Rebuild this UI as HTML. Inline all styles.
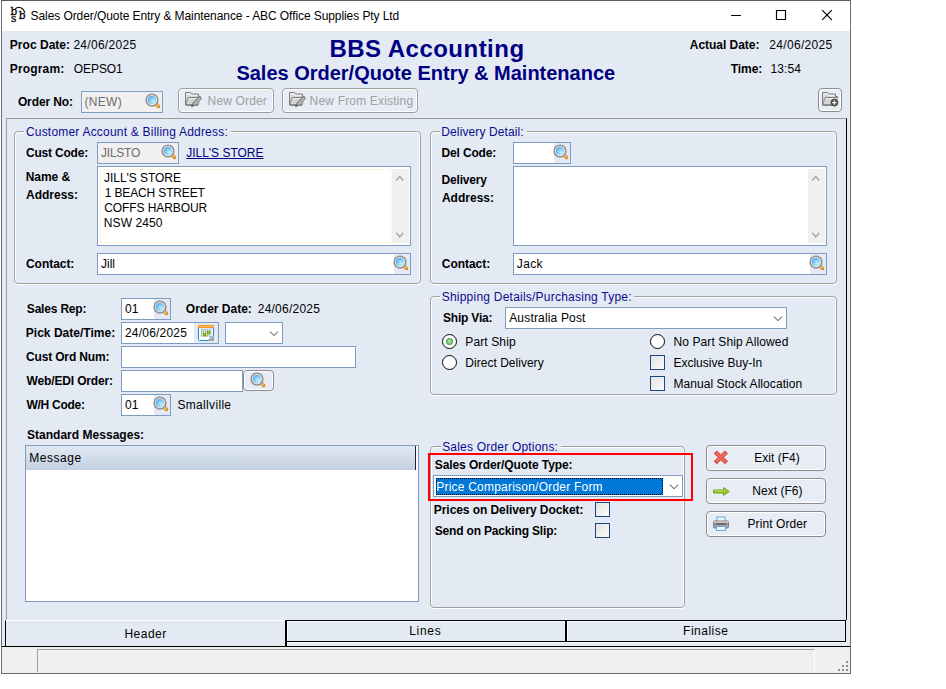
<!DOCTYPE html>
<html><head><meta charset="utf-8"><title>Sales Order/Quote Entry &amp; Maintenance</title>
<style>
html,body{margin:0;padding:0;background:#fff;}
body{width:946px;height:689px;position:relative;overflow:hidden;font-family:"Liberation Sans",sans-serif;font-size:12px;color:#000;}
.a{position:absolute;white-space:nowrap;line-height:14px;}
.b{font-weight:bold;}
.p{position:absolute;box-sizing:border-box;}
.in{position:absolute;box-sizing:border-box;border:1px solid #7F9DC3;background:#fff;}
.dis{background:#F0F0F0;}
.g{color:#6d6d6d;}
.gb{position:absolute;box-sizing:border-box;border:1px solid #A0A0A0;border-radius:4px;box-shadow:inset 1px 1px 0 #fff, inset -1px 0 0 #fff, 0 1px 0 #fff;}
.lg{position:absolute;background:#E3EAF4;color:#10109A;padding:0 2px 0 1px;line-height:14px;white-space:nowrap;}
.btn{position:absolute;box-sizing:border-box;border:1px solid #8C8C8C;border-radius:4px;background:#E7ECF5;box-shadow:inset 0 0 0 1px #fff;}
.cb{position:absolute;box-sizing:border-box;width:15px;height:15px;border:1px solid #1C4A80;background:linear-gradient(135deg,#E2E2E2,#FBFBFB);}
.rd{position:absolute;box-sizing:border-box;width:15.4px;height:15.4px;border:1px solid #050505;border-radius:50%;background:#fff;}
.ib{position:absolute;background:#E3EAF4;}
svg{position:absolute;overflow:visible;}
</style></head><body>
<svg width="0" height="0" style="left:0;top:0"><defs>
<radialGradient id="lens" cx="0.68" cy="0.68" r="0.85"><stop offset="0" stop-color="#C8F0FB"/><stop offset="0.5" stop-color="#86CCF4"/><stop offset="1" stop-color="#3B98EC"/></radialGradient>
<linearGradient id="fold" x1="0" y1="0" x2="0" y2="1"><stop offset="0" stop-color="#E4E4E4"/><stop offset="1" stop-color="#B4B4B4"/></linearGradient>
<g id="mag"><path d="M12.3 12.3L14.5 14.5" stroke="#D48712" stroke-width="3.5" stroke-linecap="round"/><path d="M12.9 12.9L14.3 14.3" stroke="#F5A833" stroke-width="2" stroke-linecap="round"/><path d="M12 12L13 13" stroke="#E6E2DA" stroke-width="1.6" stroke-linecap="round"/><circle cx="8" cy="8" r="5.9" fill="#E9E9E9" stroke="#8E8E8E" stroke-width="1.45"/><circle cx="8" cy="8" r="4.35" fill="url(#lens)"/></g>
<g id="folder"><path d="M0.5 1.5h5l1.5 1.5h6.5v2.5h2l-2.5 8.5h-12.5z" fill="url(#fold)" stroke="#808080" stroke-width="1"/><path d="M1.5 3.2h3.6l1.4 1.2h6" fill="none" stroke="#F4F4F4" stroke-width="0.9"/><path d="M0.8 13.5l2.6-7h12" fill="none" stroke="#808080" stroke-width="1"/><path d="M3.6 7.2h11.2l-2 5.8h-11.3z" fill="#D4D4D4"/><path d="M4 7.6h10" stroke="#F0F0F0" stroke-width="0.8"/><path d="M0.5 14.2h12.5" stroke="#707070" stroke-width="0.9"/></g>
</defs></svg>
<div class="p" style="left:1px;top:0;width:850px;height:674px;border:1px solid #6E6E6E;border-top-color:#5A5A5A;background:#E3EAF4"></div>
<div class="p" style="left:2px;top:1px;width:848px;height:30px;background:#fff"></div>
<svg style="left:9px;top:5px" width="20" height="20" viewBox="0 0 20 20"><g font-family="DejaVu Serif, serif" fill="#000" stroke="#000" stroke-width="0.3"><text x="1.6" y="9.7" font-size="10.5">b</text><text x="1.9" y="16.9" font-size="10.5">s</text><text x="9.8" y="13.9" font-size="10.5">b</text></g><path d="M6.2 3.9C9.4 1.0 14.6 2.4 15.8 7.8" fill="none" stroke="#111" stroke-width="1.1"/></svg>
<div class="a " style="left:30.58px;top:9px;color:#000;letter-spacing:-0.080px;">Sales Order/Quote Entry &amp; Maintenance - ABC Office Supplies Pty Ltd</div>
<svg style="left:0;top:0" width="1" height="1"><path d="M731 15.5h10M776.5 10.5h9v9h-9zM822.2 10.2l9.6 9.6M831.8 10.2l-9.6 9.6" stroke="#000" stroke-width="1.15" fill="none"/></svg>
<div class="a b" style="left:9.85px;top:38px;;letter-spacing:0.019px;">Proc Date:</div>
<div class="a " style="left:73.38px;top:38px;;letter-spacing:0.292px;">24/06/2025</div>
<div class="a b" style="left:9.85px;top:62px;;letter-spacing:0.146px;">Program:</div>
<div class="a " style="left:73.78px;top:62px;;letter-spacing:-0.065px;">OEPSO1</div>
<div class="a b" style="left:689.82px;top:38px;;letter-spacing:-0.036px;">Actual Date:</div>
<div class="a " style="left:769.28px;top:38px;;letter-spacing:0.325px;">24/06/2025</div>
<div class="a b" style="left:730.68px;top:62px;;letter-spacing:-0.050px;">Time:</div>
<div class="a " style="left:770.52px;top:62px;;letter-spacing:0.113px;">13:54</div>
<div class="a b" style="left:329.38px;top:35px;font-size:24px;line-height:28px;color:#000080;letter-spacing:0.481px;">BBS Accounting</div>
<div class="a b" style="left:236.38px;top:62px;font-size:20px;line-height:23px;color:#000080;letter-spacing:-0.006px;">Sales Order/Quote Entry &amp; Maintenance</div>
<div class="a b" style="left:17.9px;top:95px;;letter-spacing:-0.109px;">Order No:</div>
<div class="in dis" style="left:81px;top:91px;width:82px;height:22px"></div>
<div class="a g" style="left:84.45px;top:95px;;letter-spacing:0.300px;">(NEW)</div>
<svg style="left:144.3px;top:92.3px" width="18" height="18" viewBox="0 0 18 18"><use href="#mag"/></svg>
<div class="btn" style="left:178px;top:88px;width:96px;height:25px;border-color:#9E9E9E"></div>
<svg style="left:185px;top:91px" width="17" height="17" viewBox="0 0 17 17"><use href="#folder"/><path d="M6.5 15.5l1-3.2 6.8-6.8 2.2 2.2-6.8 6.8z" fill="#A8A8A8" stroke="#666" stroke-width="0.9"/><path d="M9 12.6l5.6-5.6M10.2 13.8l5.6-5.6" stroke="#D8D8D8" stroke-width="0.5"/><path d="M6.5 15.5l0.7-2.2 1.5 1.5z" fill="#444"/></svg>
<div class="a " style="left:207.6px;top:94px;color:#A0A0A0;letter-spacing:0.153px;">New Order</div>
<div class="btn" style="left:282px;top:88px;width:136px;height:25px;border-color:#9E9E9E"></div>
<svg style="left:289px;top:91px" width="17" height="17" viewBox="0 0 17 17"><use href="#folder"/><path d="M6.5 15.5l1-3.2 6.8-6.8 2.2 2.2-6.8 6.8z" fill="#A8A8A8" stroke="#666" stroke-width="0.9"/><path d="M9 12.6l5.6-5.6M10.2 13.8l5.6-5.6" stroke="#D8D8D8" stroke-width="0.5"/><path d="M6.5 15.5l0.7-2.2 1.5 1.5z" fill="#444"/></svg>
<div class="a " style="left:309.6px;top:94px;color:#A0A0A0;letter-spacing:0.177px;">New From Existing</div>
<div class="btn" style="left:818px;top:88px;width:24px;height:24px"></div>
<svg style="left:822px;top:91px" width="17" height="17" viewBox="0 0 17 17"><use href="#folder"/><circle cx="12.4" cy="11.6" r="3.8" fill="#4A4A4A"/><path d="M10.2 11.6h4.4M12.4 9.4v4.4" stroke="#fff" stroke-width="1.3"/></svg>
<div class="p" style="left:6px;top:118px;width:841px;height:502px;border-left:1px solid #9A9A9A;border-top:1px solid #9A9A9A;border-right:1px solid #000;"></div>
<div class="gb" style="left:14px;top:131px;width:407px;height:153px"></div>
<div class="p" style="left:24px;top:131px;width:207px;height:2px;background:#E3EAF4"></div>
<div class="a " style="left:25.88px;top:125px;color:#0C0C8E;letter-spacing:0.209px;">Customer Account &amp; Billing Address:</div>
<div class="a b" style="left:26.0px;top:146px;;letter-spacing:-0.208px;">Cust Code:</div>
<div class="in dis" style="left:97px;top:142px;width:82px;height:22px"></div>
<div class="a g" style="left:101.05px;top:146px;;letter-spacing:-0.245px;">JILSTO</div>
<svg style="left:160.3px;top:143.3px" width="18" height="18" viewBox="0 0 18 18"><use href="#mag"/></svg>
<div class="a " style="left:186.25px;top:146px;color:#000080;text-decoration:underline;letter-spacing:-0.020px;">JILL'S STORE</div>
<div class="a b" style="left:25.75px;top:170px;;letter-spacing:-0.045px;">Name &amp;</div>
<div class="a b" style="left:26.12px;top:188px;;letter-spacing:-0.029px;">Address:</div>
<div class="in " style="left:97px;top:166px;width:314px;height:80px"></div>
<div class="p" style="left:100px;top:169px;width:291px;height:74px;border:1px solid #FBF3DC"></div>
<div class="p" style="left:392px;top:169px;width:17px;height:74px;background:#F0F0F0"></div>
<svg style="left:0;top:0" width="1" height="1"><path d="M396.2 180.4L399.7 176.4L403.2 180.4" fill="none" stroke="#ABABAB" stroke-width="1.5"/></svg>
<svg style="left:0;top:0" width="1" height="1"><path d="M396.2 232.8L399.7 236.8L403.2 232.8" fill="none" stroke="#ABABAB" stroke-width="1.5"/></svg>
<div class="a " style="left:104.05px;top:171px;;letter-spacing:-0.048px;">JILL'S STORE</div>
<div class="a " style="left:104.82px;top:186px;;letter-spacing:-0.152px;">1 BEACH STREET</div>
<div class="a " style="left:104.18px;top:201px;;letter-spacing:-0.087px;">COFFS HARBOUR</div>
<div class="a " style="left:103.8px;top:216px;;letter-spacing:0.100px;">NSW 2450</div>
<div class="a b" style="left:26.0px;top:257px;;letter-spacing:-0.043px;">Contact:</div>
<div class="in " style="left:97px;top:253px;width:314px;height:22px"></div>
<div class="a " style="left:101px;top:257px;">Jill</div>
<div class="ib" style="left:394px;top:254px;width:16px;height:20px"></div>
<svg style="left:392.4px;top:254.4px" width="18" height="18" viewBox="0 0 18 18"><use href="#mag"/></svg>
<div class="gb" style="left:430px;top:131px;width:407px;height:153px"></div>
<div class="p" style="left:440px;top:131px;width:87px;height:2px;background:#E3EAF4"></div>
<div class="a " style="left:441.3px;top:125px;color:#0C0C8E;letter-spacing:0.112px;">Delivery Detail:</div>
<div class="a b" style="left:441.55px;top:146px;;letter-spacing:-0.166px;">Del Code:</div>
<div class="in " style="left:513px;top:142px;width:58px;height:22px"></div>
<div class="ib" style="left:554px;top:143px;width:16px;height:20px"></div>
<svg style="left:552.4px;top:143.3px" width="18" height="18" viewBox="0 0 18 18"><use href="#mag"/></svg>
<div class="a b" style="left:441.55px;top:173px;;letter-spacing:-0.196px;">Delivery</div>
<div class="a b" style="left:441.92px;top:191px;;letter-spacing:0.014px;">Address:</div>
<div class="in " style="left:513px;top:166px;width:314px;height:80px"></div>
<div class="p" style="left:808px;top:169px;width:17px;height:74px;background:#F0F0F0"></div>
<svg style="left:0;top:0" width="1" height="1"><path d="M812.2 180.4L815.7 176.4L819.2 180.4" fill="none" stroke="#ABABAB" stroke-width="1.5"/></svg>
<svg style="left:0;top:0" width="1" height="1"><path d="M812.2 232.8L815.7 236.8L819.2 232.8" fill="none" stroke="#ABABAB" stroke-width="1.5"/></svg>
<div class="a b" style="left:441.8px;top:257px;;letter-spacing:-0.043px;">Contact:</div>
<div class="in " style="left:513px;top:253px;width:314px;height:22px"></div>
<div class="a " style="left:516.85px;top:257px;;letter-spacing:0.308px;">Jack</div>
<div class="ib" style="left:810px;top:254px;width:16px;height:20px"></div>
<svg style="left:808.4px;top:254.4px" width="18" height="18" viewBox="0 0 18 18"><use href="#mag"/></svg>
<div class="a b" style="left:26.82px;top:302px;;letter-spacing:-0.186px;">Sales Rep:</div>
<div class="in " style="left:121px;top:298px;width:50px;height:22px"></div>
<div class="a " style="left:125.1px;top:302px;;letter-spacing:0.050px;">01</div>
<div class="ib" style="left:154px;top:299px;width:16px;height:20px"></div>
<svg style="left:152.3px;top:299.4px" width="18" height="18" viewBox="0 0 18 18"><use href="#mag"/></svg>
<div class="a b" style="left:185.8px;top:302px;;letter-spacing:0.002px;">Order Date:</div>
<div class="a " style="left:257.77px;top:302px;;letter-spacing:0.225px;">24/06/2025</div>
<div class="a b" style="left:25.75px;top:326px;;letter-spacing:0.025px;">Pick Date/Time:</div>
<div class="in " style="left:121px;top:322px;width:98px;height:22px"></div>
<div class="a " style="left:124.98px;top:326px;;letter-spacing:0.203px;">24/06/2025</div>
<div class="ib" style="left:194px;top:323px;width:24px;height:20px"></div>
<svg style="left:198px;top:325px" width="16" height="16" viewBox="0 0 16 16"><rect x="0.5" y="1.5" width="15" height="14" rx="1" fill="#fff" stroke="#2486CC"/><rect x="1.2" y="3" width="13.6" height="0.9" fill="#CDEBFA"/><path d="M10 16h6v-6z" fill="#A6A6A6"/><path d="M10.2 15.6C11.8 14.3 12.3 12.8 12 11.2C13.2 11.7 14.8 11.3 15.6 10.3L15.6 10.2" fill="#F4F8FB" stroke="#3C8DCC" stroke-width="0.8"/><rect x="0" y="0" width="16" height="3" rx="1" fill="#F7981D"/><rect x="1" y="1.2" width="14" height="0.8" fill="#FCCF8E"/><path d="M3 4.8h10M3 6.8h10M3 8.8h10M3 10.8h8M3.5 4.5v7.5M5.5 4.5v7.5M7.5 4.5v7.5M9.5 4.5v7.5M11.5 4.5v6M13 4.5v5" stroke="#A9A9A9" stroke-width="0.8"/><rect x="9" y="6" width="3.2" height="3.2" fill="#6BAE00"/><rect x="5" y="8" width="3.2" height="3.2" fill="#6BAE00"/><rect x="10.1" y="7.1" width="1" height="1" fill="#B5DD3C"/><rect x="6.1" y="9.1" width="1" height="1" fill="#B5DD3C"/></svg>
<div class="in " style="left:225px;top:322px;width:58px;height:22px"></div>
<svg style="left:0;top:0" width="1" height="1"><path d="M269.9 331.5L274 335.5L278.1 331.5" fill="none" stroke="#404040" stroke-width="1.0"/></svg>
<div class="a b" style="left:26.0px;top:350px;;letter-spacing:-0.160px;">Cust Ord Num:</div>
<div class="in " style="left:121px;top:346px;width:235px;height:22px"></div>
<div class="a b" style="left:26.5px;top:374px;;letter-spacing:-0.142px;">Web/EDI Order:</div>
<div class="in " style="left:121px;top:370px;width:122px;height:22px"></div>
<div class="btn" style="left:243px;top:370px;width:31px;height:21px"></div>
<svg style="left:248.6px;top:371.4px" width="18" height="18" viewBox="0 0 18 18"><use href="#mag"/></svg>
<div class="a b" style="left:26.5px;top:398px;;letter-spacing:-0.275px;">W/H Code:</div>
<div class="in " style="left:121px;top:394px;width:50px;height:22px"></div>
<div class="a " style="left:125.1px;top:398px;;letter-spacing:0.050px;">01</div>
<div class="ib" style="left:154px;top:395px;width:16px;height:20px"></div>
<svg style="left:152.3px;top:395.4px" width="18" height="18" viewBox="0 0 18 18"><use href="#mag"/></svg>
<div class="a " style="left:177.48px;top:398px;;letter-spacing:0.322px;">Smallville</div>
<div class="a b" style="left:26.92px;top:428px;;letter-spacing:0.028px;">Standard Messages:</div>
<div class="in " style="left:25px;top:445px;width:394px;height:157px"></div>
<div class="p" style="left:26px;top:446px;width:390px;height:24px;background:linear-gradient(#E1E8F1,#C3D0E1);border-right:1px solid #222"></div>
<div class="a " style="left:29.2px;top:451px;;letter-spacing:0.529px;">Message</div>
<div class="gb" style="left:430px;top:296px;width:407px;height:99px"></div>
<div class="p" style="left:440px;top:296px;width:194px;height:2px;background:#E3EAF4"></div>
<div class="a " style="left:441.68px;top:290px;color:#0C0C8E;letter-spacing:0.229px;">Shipping Details/Purchasing Type:</div>
<div class="a b" style="left:442.92px;top:311px;;letter-spacing:-0.178px;">Ship Via:</div>
<div class="in " style="left:505px;top:307px;width:282px;height:22px"></div>
<div class="a " style="left:509.2px;top:311px;;letter-spacing:0.171px;">Australia Post</div>
<svg style="left:0;top:0" width="1" height="1"><path d="M773.9 316.6L778 320.6L782.1 316.6" fill="none" stroke="#404040" stroke-width="1.0"/></svg>
<div class="rd" style="left:441.8px;top:333.8px;background:#fff"></div>
<div class="p" style="left:445.7px;top:337.7px;width:7.6px;height:7.6px;border-radius:50%;background:radial-gradient(#BCE2B8 0%,#9AD296 30%,#42AE3E 62%,#3FA83B 72%,#D4EFD2 100%)"></div>
<div class="a " style="left:465.3px;top:335px;;letter-spacing:0.116px;">Part Ship</div>
<div class="rd" style="left:441.8px;top:354.8px"></div>
<div class="a " style="left:465.3px;top:356px;;letter-spacing:0.023px;">Direct Delivery</div>
<div class="rd" style="left:649.7px;top:333.8px"></div>
<div class="a " style="left:673.4px;top:335px;;letter-spacing:0.116px;">No Part Ship Allowed</div>
<div class="cb" style="left:650px;top:355px"></div>
<div class="a " style="left:673.4px;top:356px;;letter-spacing:0.008px;">Exclusive Buy-In</div>
<div class="cb" style="left:650px;top:376px"></div>
<div class="a " style="left:673.4px;top:377px;;letter-spacing:0.062px;">Manual Stock Allocation</div>
<div class="gb" style="left:430px;top:446px;width:255px;height:162px"></div>
<div class="p" style="left:441px;top:446px;width:120px;height:2px;background:#E3EAF4"></div>
<div class="a " style="left:442.18px;top:440px;color:#0C0C8E;letter-spacing:0.196px;">Sales Order Options:</div>
<div class="a b" style="left:434.72px;top:458px;;letter-spacing:-0.089px;">Sales Order/Quote Type:</div>
<div class="in " style="left:433px;top:475px;width:250px;height:22px"></div>
<svg style="left:0;top:0" width="1" height="1"><path d="M669.9 484.7L674 488.7L678.1 484.7" fill="none" stroke="#404040" stroke-width="1.0"/></svg>
<div class="p" style="left:436px;top:478px;width:227px;height:17px;background:#0078D7;border:1px dotted #000;outline:0"></div>
<div class="a " style="left:436.2px;top:480px;color:#fff;letter-spacing:0.220px;">Price Comparison/Order Form</div>
<div class="a b" style="left:433.85px;top:503px;;letter-spacing:-0.072px;">Prices on Delivery Docket:</div>
<div class="cb" style="left:595px;top:502px"></div>
<div class="a b" style="left:434.72px;top:524px;;letter-spacing:-0.170px;">Send on Packing Slip:</div>
<div class="cb" style="left:595px;top:523px"></div>
<div class="p" style="left:428px;top:453px;width:265px;height:48px;border:2px solid #FF0000"></div>
<div class="btn" style="left:706px;top:445px;width:120px;height:26px"></div>
<div class="a " style="left:754.2px;top:451px;;letter-spacing:0.022px;">Exit (F4)</div>
<div class="btn" style="left:706px;top:478px;width:120px;height:26px"></div>
<div class="a " style="left:752.3px;top:484px;;letter-spacing:0.031px;">Next (F6)</div>
<div class="btn" style="left:706px;top:511px;width:120px;height:26px"></div>
<div class="a " style="left:747.5px;top:517px;;letter-spacing:0.090px;">Print Order</div>
<svg style="left:713px;top:450px" width="16" height="15" viewBox="0 0 16 15"><path d="M2.3 2l11.2 10.8M13.5 2l-11.2 10.8" stroke="#DC4A42" stroke-width="4.3" stroke-linecap="butt"/><path d="M3.2 2.9l9.4 9M12.6 2.9l-9.4 9" stroke="#EC6A60" stroke-width="2.3" stroke-linecap="butt"/></svg>
<svg style="left:713px;top:487px" width="17" height="10" viewBox="0 0 17 10"><path d="M0.6 3.0h9.9v-2.4l5.6 3.9-5.6 3.9v-2.4h-9.9z" fill="#9CC925" stroke="#6C9812" stroke-width="0.9" stroke-linejoin="round"/><path d="M1.2 3.9h10" stroke="#C8E36E" stroke-width="0.8"/></svg>
<svg style="left:713px;top:516px" width="16" height="16" viewBox="0 0 16 16"><rect x="4" y="1" width="8" height="4.5" fill="#EAF4FC" stroke="#6FA8D8"/><rect x="0.5" y="5" width="15" height="7" rx="1.2" fill="#A4A4A4" stroke="#7C7C7C"/><rect x="0.8" y="5.3" width="14.4" height="1.6" fill="#C8C8C8"/><rect x="2.5" y="7" width="11" height="1.8" fill="#666"/><rect x="3.5" y="10.5" width="9" height="4" fill="#EAF4FC" stroke="#6FA8D8"/></svg>
<div class="p" style="left:5px;top:620px;width:281px;height:27px;border-left:1px solid #000;border-top:1px solid #fff;"></div>
<div class="a " style="left:124.4px;top:627px;;letter-spacing:0.495px;">Header</div>
<div class="p" style="left:287px;top:642px;width:559px;height:1px;background:#F6F9FD"></div>
<div class="p" style="left:285px;top:620px;width:281px;height:27px;border-left:2px solid #000;"></div>
<div class="p" style="left:285px;top:620px;width:282px;height:22px;border-left:2px solid #000;border-top:1px solid #000;border-bottom:1px solid #000;box-shadow:inset 1px 1px 0 #F6F9FD"></div>
<div class="a " style="left:409.2px;top:624px;;letter-spacing:0.688px;">Lines</div>
<div class="p" style="left:565px;top:620px;width:281px;height:22px;border:1px solid #000;border-left:2px solid #000;box-shadow:inset 1px 1px 0 #F6F9FD"></div>
<div class="a " style="left:683.1px;top:624px;;letter-spacing:0.504px;">Finalise</div>
<div class="p" style="left:2px;top:646px;width:848px;height:27px;background:#F0F0F0;border-top:1px solid #000"></div>
<div class="p" style="left:37px;top:649px;width:778px;height:23px;border-left:1px solid #A0A0A0;border-top:1px solid #A0A0A0;border-right:1px solid #fff"></div>
<svg style="left:0;top:0" width="1" height="1"><path d="M846 661h2v2h-2zM842 665h2v2h-2zM846 665h2v2h-2zM838 669h2v2h-2zM842 669h2v2h-2zM846 669h2v2h-2z" fill="#8C8C8C"/></svg>
</body></html>
